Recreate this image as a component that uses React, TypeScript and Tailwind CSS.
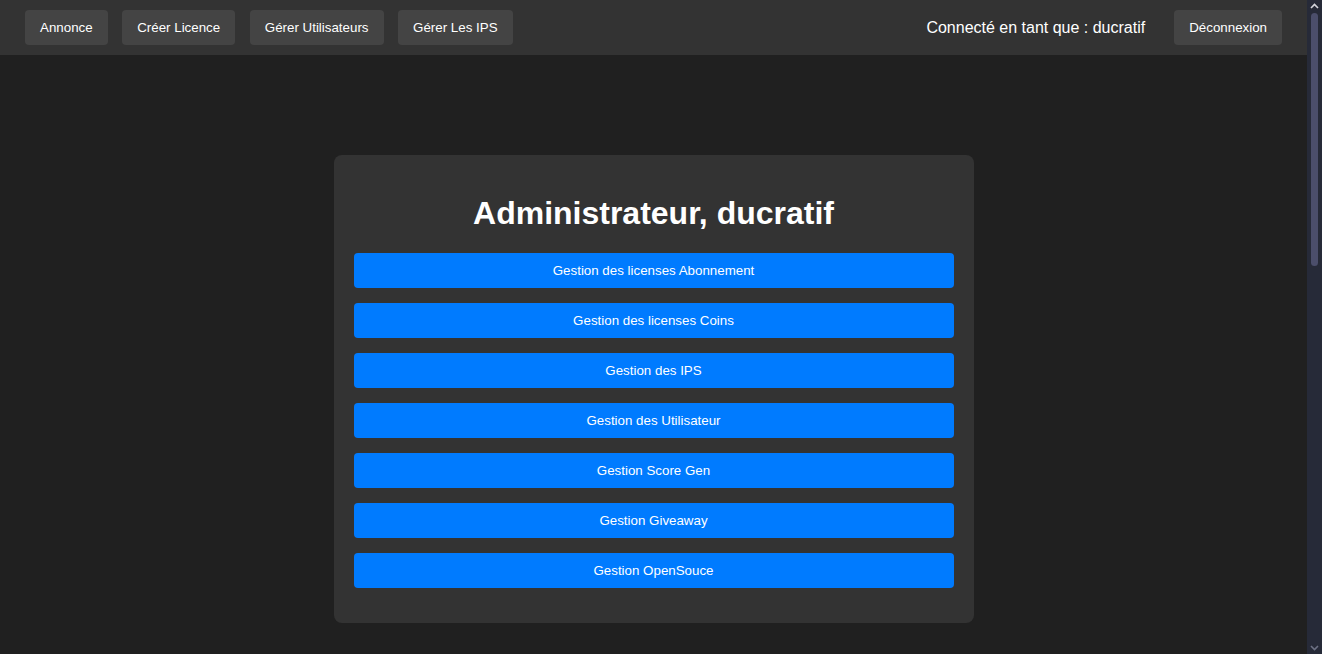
import React from "react";

const navItems = ["Annonce", "Créer Licence", "Gérer Utilisateurs", "Gérer Les IPS"];
const actions = [
  "Gestion des licenses Abonnement",
  "Gestion des licenses Coins",
  "Gestion des IPS",
  "Gestion des Utilisateur",
  "Gestion Score Gen",
  "Gestion Giveaway",
  "Gestion OpenSouce",
];

function Scrollbar() {
  return (
    <div className="flex w-[15px] flex-col items-center bg-[#262a38]">
      <svg width="15" height="13" viewBox="0 0 15 13" className="shrink-0">
        <path d="M4 8 L7.5 4.5 L11 8" fill="none" stroke="#d4d5dc" strokeWidth="1.6" />
      </svg>
      <div className="h-[253px] w-[7px] rounded-[4px] bg-[#4b4e6b]" />
      <div className="flex-1" />
      <svg width="15" height="12" viewBox="0 0 15 12" className="shrink-0">
        <path d="M4 4 L7.5 7.5 L11 4" fill="none" stroke="#6d7184" strokeWidth="1.6" />
      </svg>
    </div>
  );
}

export default function App() {
  return (
    <div
      className="flex h-[654px] overflow-hidden bg-[#202020] text-white"
      style={{ fontFamily: '"Liberation Sans", Arial, sans-serif' }}
    >
      <div className="flex-1">
        <nav className="flex h-[55px] items-center justify-between bg-[#333333] px-[25px]">
          <div className="flex items-center gap-[14.6px]">
            {navItems.map((n) => (
              <button
                key={n}
                className="h-[35px] rounded-[4px] bg-[#444444] px-[15px] pt-[1px] text-[13.333px] text-white"
              >
                {n}
              </button>
            ))}
          </div>
          <div className="flex items-center gap-[29px]">
            <span className="pt-[1px] text-[16px]">Connecté en tant que : ducratif</span>
            <button className="h-[35px] rounded-[4px] bg-[#444444] px-[15px] pt-[1px] text-[13.333px] text-white">
              Déconnexion
            </button>
          </div>
        </nav>
        <div className="flex justify-center pt-[100px]">
          <div className="w-[640px] rounded-[8px] bg-[#333333] px-[20px] pt-[20px] pb-[20px]">
            <h1 className="mt-[20px] mb-[21px] text-center text-[32px] leading-[37px] font-bold">
              Administrateur, ducratif
            </h1>
            <div className="flex flex-col gap-[15px]">
              {actions.map((a) => (
                <button
                  key={a}
                  className="h-[35px] w-full rounded-[4px] bg-[#007bff] text-[13.333px] text-white"
                >
                  {a}
                </button>
              ))}
            </div>
            <div className="h-[15px]" />
          </div>
        </div>
      </div>
      <Scrollbar />
    </div>
  );
}
